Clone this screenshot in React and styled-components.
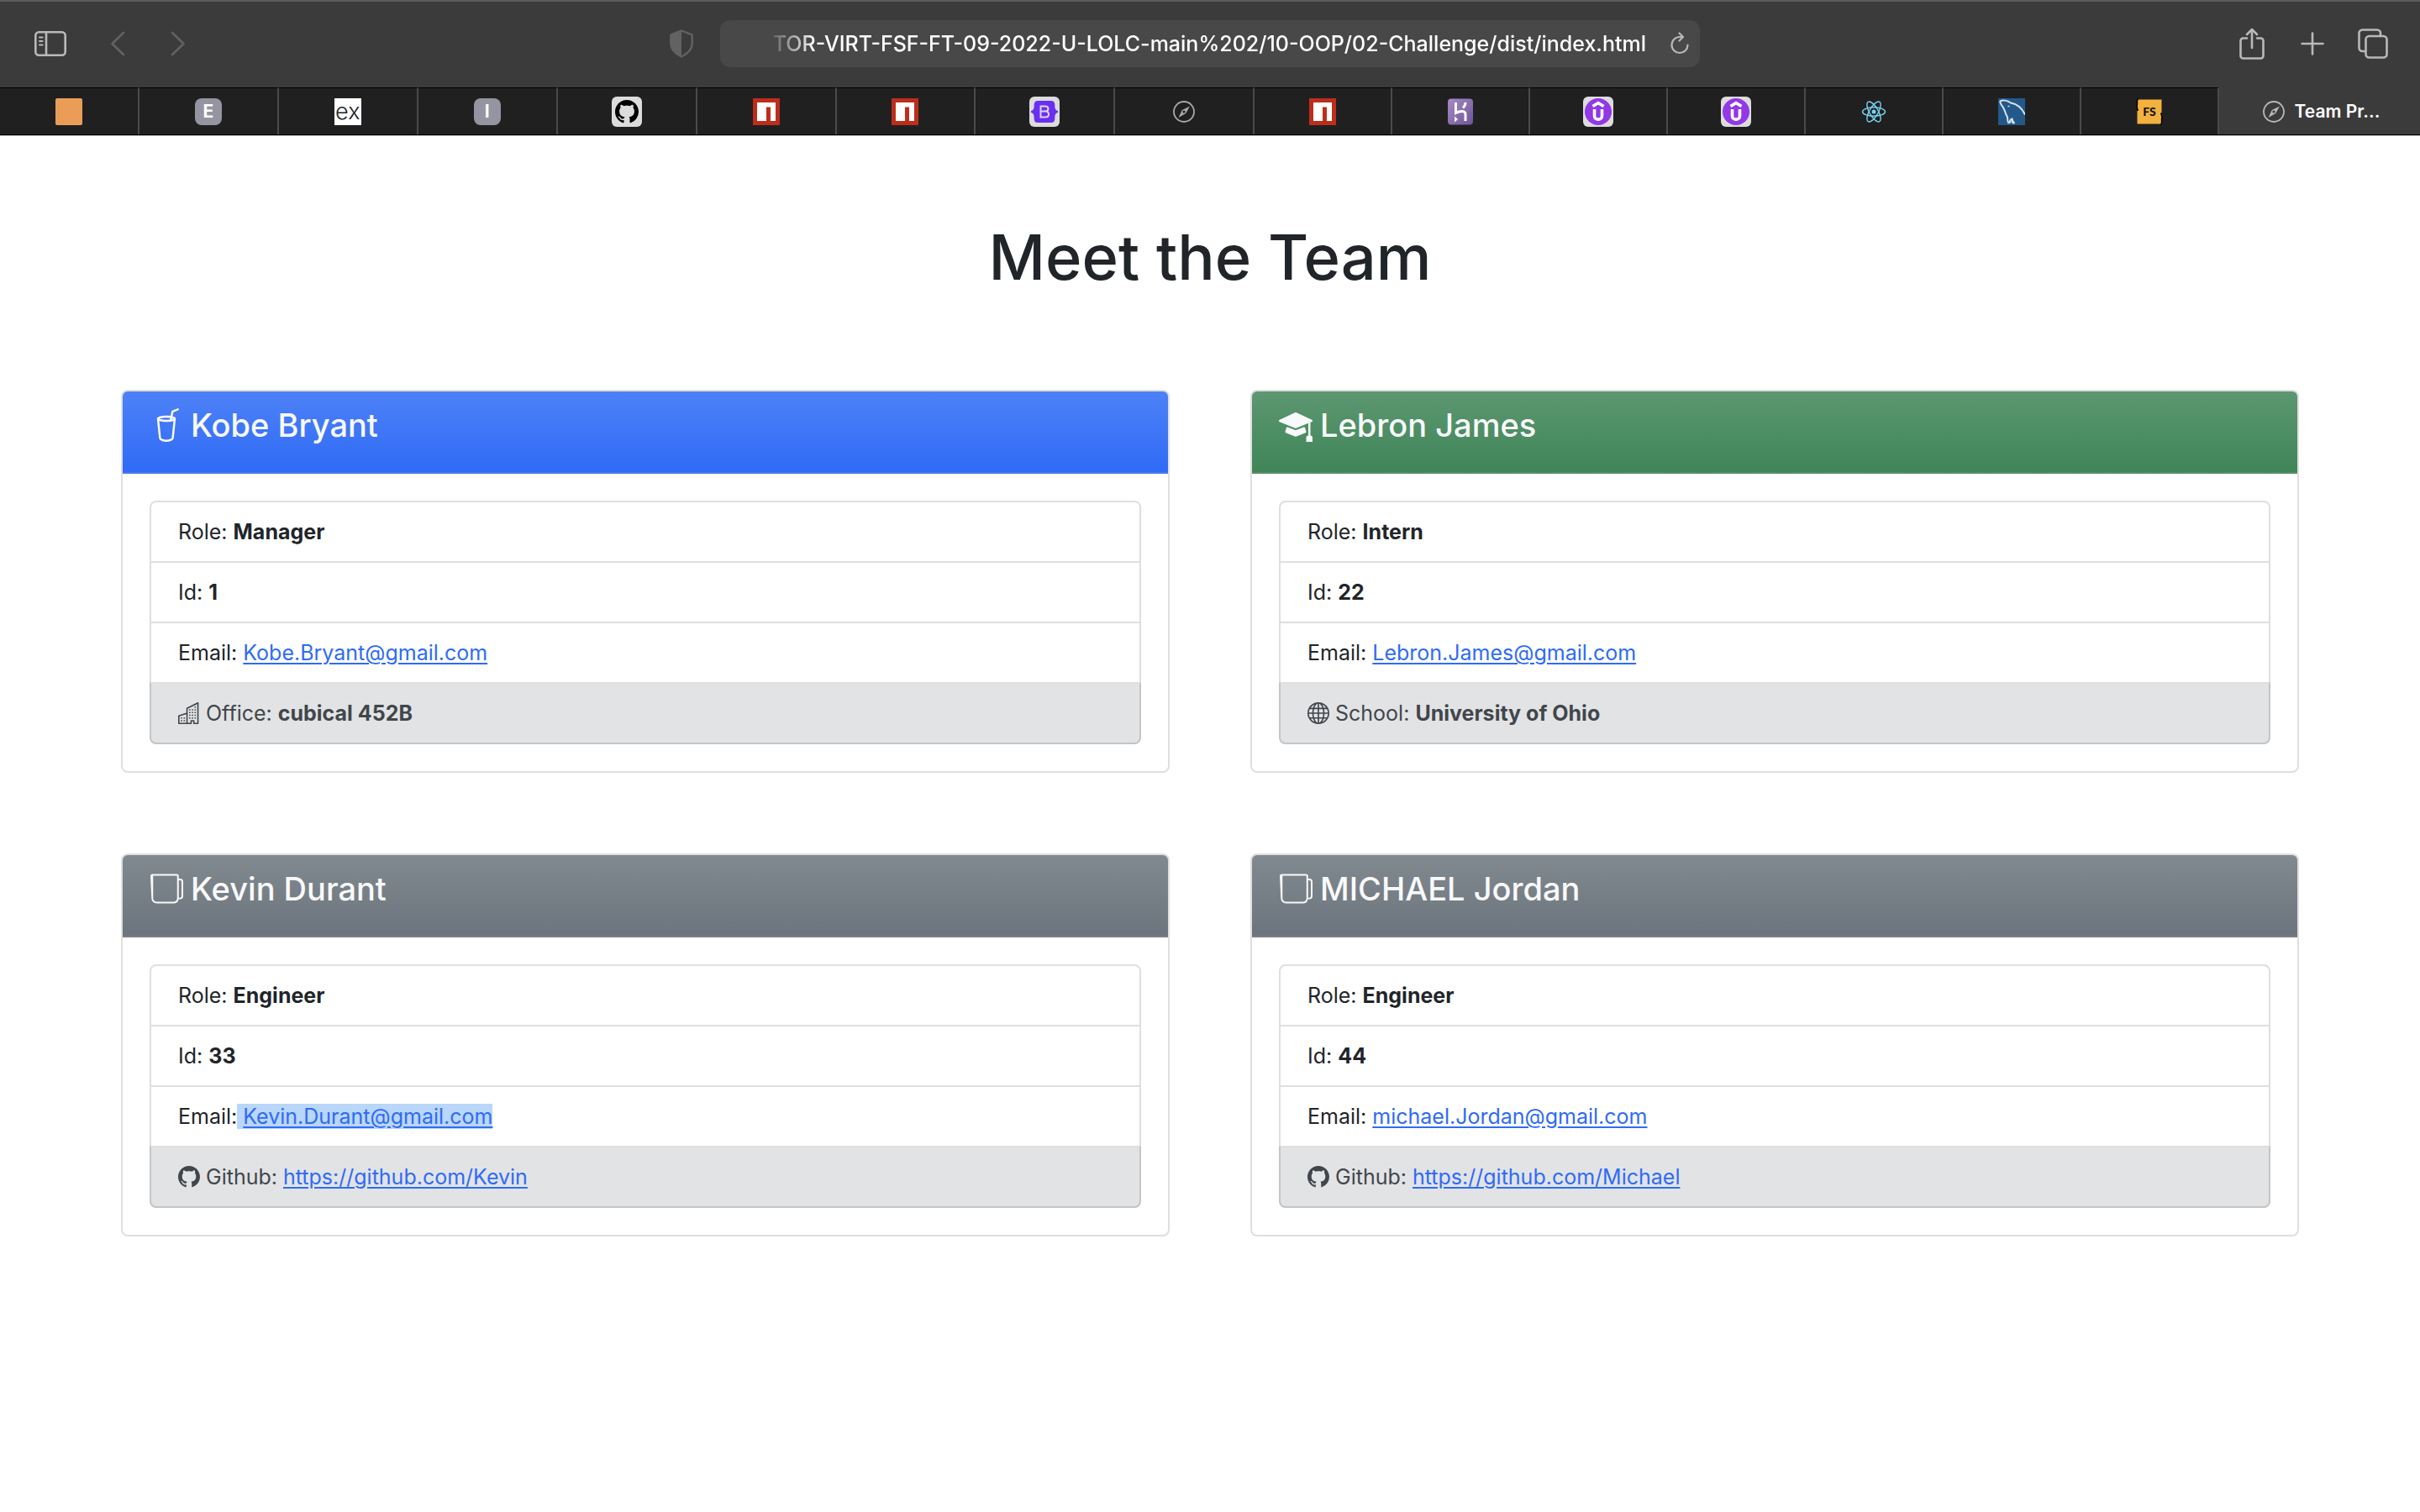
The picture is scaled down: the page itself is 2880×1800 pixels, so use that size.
import React from "react";
import styled, { createGlobalStyle, css } from "styled-components";
import {
  BsCupStraw,
  BsMortarboardFill,
  BsBuildings,
  BsGlobe,
  BsGithub,
} from "react-icons/bs";

const Global = createGlobalStyle`
  * { box-sizing: border-box; }
  body {
    margin: 0;
    background: #fff;
    color: #212529;
    font-family: Inter, "Liberation Sans", sans-serif;
    font-size: 25px;
    line-height: 38px;
  }
  svg { display: block; flex: none; }
`;

/* ---------- browser window ---------- */

const Chrome = styled.header`
  background: #3b3b3b;
  border-top: 2px solid #5b5b5b;
  border-bottom: 1px solid #b9b9b9;
`;

const Toolbar = styled.div`
  display: grid;
  grid-template-columns: 1fr auto 1fr;
  align-items: center;
  gap: 22px;
  height: 102px;
  padding: 0 32px 2px;
`;

const ToolGroup = styled.div`
  display: flex;
  align-items: center;
  gap: 24px;
`;

const LeadingTools = styled(ToolGroup)`
  gap: 32px;
  padding-left: 4px;

  & > :last-child {
    margin-left: auto;
  }
`;

const TrailingTools = styled(ToolGroup)`
  justify-content: flex-end;
`;

const ToolButton = styled.button`
  display: flex;
  align-items: center;
  justify-content: center;
  width: 48px;
  height: 48px;
  padding: 0;
  border: 0;
  background: none;
  color: ${(p) => (p.disabled ? "#626262" : "#b9b9b9")};
`;

const AddressField = styled.div`
  display: flex;
  align-items: center;
  gap: 16px;
  width: 1166px;
  height: 56px;
  padding: 0 0 0 54px;
  border-radius: 12px;
  background: #484848;
`;

const AddressInput = styled.input`
  flex: 1;
  min-width: 0;
  padding: 0;
  border: 0;
  outline: 0;
  background: none;
  color: #fff;
  font: 500 25px/38px Inter, "Liberation Sans", sans-serif;
  text-align: right;
  mask-image: linear-gradient(to right, transparent, #000 60px);
`;

const TabStrip = styled.nav`
  display: flex;
  height: 57px;
  border-bottom: 1px solid #000;
`;

const Tab = styled.button`
  display: flex;
  align-items: center;
  justify-content: center;
  gap: 12px;
  flex: ${(p) => p.$grow} 1 0;
  min-width: 0;
  padding: 0;
  border: 0;
  border-right: 2px solid #4a4a4a;
  border-top: 1px solid #000;
  background: #202020;
  color: #fff;
  font: 600 21px/30px Inter, "Liberation Sans", sans-serif;
  white-space: nowrap;
  ${(p) =>
    p.$active &&
    css`
      padding-left: 4px;
      border-right: 0;
      border-color: transparent;
      background: #3b3b3b;
    `}
`;

const Favicon = styled.span`
  display: flex;
  align-items: center;
  justify-content: center;
  width: ${(p) => p.$size || 32}px;
  height: ${(p) => p.$size || 32}px;
  border-radius: ${(p) => p.$radius || 0}px;
  background: ${(p) => p.$bg || "none"};
  color: ${(p) => p.$color || "#fff"};
  font-size: ${(p) => p.$font || 21}px;
  font-weight: ${(p) => p.$weight || 700};
  overflow: hidden;
`;

const Line = (props) => (
  <svg
    fill="none"
    stroke="currentColor"
    strokeWidth="2.6"
    strokeLinecap="round"
    strokeLinejoin="round"
    aria-hidden="true"
    {...props}
  />
);

const SidebarIcon = () => (
  <Line width="38" height="30" viewBox="0 0 38 30">
    <rect x="1.3" y="1.3" width="35.4" height="27.4" rx="4" />
    <path d="M14 1.5v27" />
    <path d="M6 7.5h3.6M6 12h3.6M6 16.5h3.6" strokeWidth="2" />
  </Line>
);
const BackIcon = () => (
  <Line width="18" height="30" viewBox="0 0 18 30"><path d="M16 2 2.5 15 16 28" /></Line>
);
const ForwardIcon = () => (
  <Line width="18" height="30" viewBox="0 0 18 30"><path d="M2 2 15.5 15 2 28" /></Line>
);
const ShieldIcon = () => (
  <svg width="28" height="34" viewBox="0 0 28 34" aria-hidden="true">
    <path
      d="M14 1.5 26 6.2c.5.2.7.5.7 1V17c0 7-5 11.500-12.700 15.500C6.300 28.500 1.300 24 1.300 17V7.200c0-.5.2-.8.7-1z"
      fill="none"
      stroke="#626262"
      strokeWidth="2.4"
    />
    <path d="M14 1.5 2 6.200c-.5.2-.7.5-.7 1V17c0 7 5 11.500 12.700 15.500z" fill="#626262" />
  </svg>
);
const ReloadIcon = () => (
  <Line width="24" height="28" viewBox="0 0 24 28" strokeWidth="2.2">
    <path d="M21.500 15.500a9.500 9.500 0 1 1-9.500-9.500h3" />
    <path d="M11.500 1.500 16 6l-4.500 4.500" />
  </Line>
);
const ShareIcon = () => (
  <Line width="30" height="38" viewBox="0 0 30 38">
    <path d="M9 12.500H4.500a3 3 0 0 0-3 3v18a3 3 0 0 0 3 3h21a3 3 0 0 0 3-3v-18a3 3 0 0 0-3-3H21" />
    <path d="M15 24V2M9 8l6-6 6 6" />
  </Line>
);
const PlusIcon = () => (
  <Line width="28" height="28" viewBox="0 0 28 28"><path d="M14 1.500v25M1.500 14h25" /></Line>
);
const TabsIcon = () => (
  <Line width="36" height="36" viewBox="0 0 36 36">
    <rect x="9.500" y="9" width="25" height="25.500" rx="4" />
    <path d="M9 27H5.500a4 4 0 0 1-4-4V5.500a4 4 0 0 1 4-4H23a4 4 0 0 1 4 4V9" />
  </Line>
);
const CompassIcon = ({ color = "#a8a8a8", hole = "#202020" }) => (
  <svg width="26" height="26" viewBox="0 0 26 26" fill="none" aria-hidden="true">
    <circle cx="13" cy="13" r="12" stroke={color} strokeWidth="1.8" />
    <path d="M20 6.500 15.200 15 6.500 20 10.800 11z" fill={color} />
    <circle cx="13" cy="13" r="1.6" fill={hole} />
  </svg>
);
const NpmIcon = () => (
  <svg width="32" height="32" viewBox="0 0 32 32" aria-hidden="true">
    <path fill="#bc2e1b" d="M0 0h32v32H0z" />
    <path fill="#fff" d="M5 5h22v22h-6V10.500h-5V27H5z" />
  </svg>
);
const BootstrapIcon = () => (
  <svg width="32" height="28" viewBox="0 0 32 28" aria-hidden="true">
    <path
      fill="#6a2ff0"
      d="M8 1h16c3 0 4.500 2 4.300 5-.1 4 .7 6.500 3.700 7v2c-3 .5-3.800 3-3.700 7 .2 3-1.300 5-4.300 5H8c-3 0-4.500-2-4.300-5 .1-4-.7-6.500-3.700-7v-2c3-.5 3.800-3 3.700-7C3.500 3 5 1 8 1z"
    />
    <path
      fill="none"
      stroke="#dcd6f5"
      strokeWidth="2"
      d="M11.500 7.500H17c4.600 0 4.600 6 0 6h-5.500zM11.500 13.500H17c5.400 0 5.400 7 0 7h-5.500z"
    />
  </svg>
);
const HerokuIcon = () => (
  <svg width="32" height="32" viewBox="0 0 32 32" aria-hidden="true">
    <defs>
      <linearGradient id="heroku" x1="0" y1="0" x2="1" y2="1">
        <stop offset="0" stopColor="#a78bc8" />
        <stop offset="1" stopColor="#6f5596" />
      </linearGradient>
    </defs>
    <rect x="1" y="0.500" width="30" height="31" rx="4" fill="url(#heroku)" />
    <path
      d="M10.500 5v12.500c4-2 11.500-3.500 11.500 1V27M22 5c0 2.500-1 4.500-3 6.500"
      fill="none"
      stroke="#fff"
      strokeWidth="3"
    />
    <path d="M9 21.500 13 25l-4 3.500z" fill="#fff" />
  </svg>
);
const UdemyIcon = () => (
  <svg width="34" height="34" viewBox="0 0 34 34" aria-hidden="true">
    <circle cx="17" cy="17" r="16" fill="#9238e6" />
    <path
      d="M10.500 10.500 17 6.500l6.500 4M12.500 14v8c0 5.500 9 5.500 9 0v-8"
      fill="none"
      stroke="#fff"
      strokeWidth="3.600"
    />
  </svg>
);
const ReactIcon = () => (
  <svg width="30" height="30" viewBox="0 0 30 30" fill="none" stroke="#78d3f0" strokeWidth="1.400" aria-hidden="true">
    <ellipse cx="15" cy="15" rx="13.500" ry="5.200" />
    <ellipse cx="15" cy="15" rx="13.500" ry="5.200" transform="rotate(60 15 15)" />
    <ellipse cx="15" cy="15" rx="13.500" ry="5.200" transform="rotate(120 15 15)" />
    <circle cx="15" cy="15" r="2.500" fill="#78d3f0" stroke="none" />
  </svg>
);
const MysqlIcon = () => (
  <svg width="32" height="32" viewBox="0 0 32 32" fill="none" stroke="#d5e2ec" aria-hidden="true">
    <path fill="#23598a" stroke="none" d="M0 0h32v32H0z" />
    <path d="M32 19.500C28.500 12 23 7 15 5.500 11 2.500 5 1.500 2.500 3.500c-1 3 2.500 5 4 8.500 2 4 2.500 7 4.500 10.500 0 3 0 5 1.500 7.500" strokeWidth="2" />
    <path d="M13.500 30c0-3 1-4.500 3-5.500.5 2.500 1.500 4 3 5.500M16 27l2 3" strokeWidth="2" />
    <path d="M11.500 9.500h2" strokeWidth="1.500" />
  </svg>
);
const BracesIcon = () => (
  <svg width="32" height="32" viewBox="0 0 32 32" fill="none" aria-hidden="true">
    <path fill="#f3b13e" d="M1.500 1.500h29v29h-29z" />
    <path
      d="M3 .8C1.200.8 1.500 3 1.500 6.500S.8 7.500.8 8.500s.9.500.9 5.500H3M29 31.200c1.800 0 1.500-2.200 1.500-6s.7-1 .7-2-1-.5-1-5H29"
      stroke="#000"
      strokeWidth="1.400"
    />
    <text
      x="16"
      y="21"
      fill="#111"
      fontFamily="Lato, sans-serif"
      fontSize="14"
      fontWeight="900"
      textAnchor="middle"
    >
      FS
    </text>
  </svg>
);

const tabs = [
  { name: "Slides", icon: <Favicon $bg="#eb9d58" $radius={2} /> },
  { name: "E", icon: <Favicon $bg="#9594a1" $radius={8}>E</Favicon> },
  { name: "Express", icon: <Favicon $bg="#fff" $color="#222" $weight={300} $font={27}>ex</Favicon> },
  { name: "I", icon: <Favicon $bg="#9594a1" $radius={8}>I</Favicon> },
  { name: "GitHub", icon: <Favicon $size={36} $bg="#dcdcdc" $radius={6} $color="#000"><BsGithub size={28} /></Favicon> },
  { name: "npm", icon: <NpmIcon /> },
  { name: "npm", icon: <NpmIcon /> },
  { name: "Bootstrap", icon: <Favicon $size={36} $bg="#dcdcdc" $radius={6}><BootstrapIcon /></Favicon> },
  { name: "Page", icon: <CompassIcon /> },
  { name: "npm", icon: <NpmIcon /> },
  { name: "Heroku", icon: <HerokuIcon /> },
  { name: "Course", icon: <Favicon $size={36} $bg="#dcdcdc" $radius={6}><UdemyIcon /></Favicon> },
  { name: "Course", icon: <Favicon $size={36} $bg="#dcdcdc" $radius={6}><UdemyIcon /></Favicon> },
  { name: "React", icon: <ReactIcon /> },
  { name: "MySQL", icon: <MysqlIcon /> },
  { name: "FS", icon: <BracesIcon /> },
];

/* ---------- team page ---------- */

const Page = styled.main`
  padding: 96px 5% 144px;
`;

const Title = styled.h1`
  margin: 0 0 110px;
  font-size: 74px;
  font-weight: 500;
  line-height: 96px;
  text-align: center;
`;

const Team = styled.div`
  display: grid;
  grid-template-columns: 1fr 1fr;
  gap: 96px;
`;

const Card = styled.article`
  border: 2px solid #dfdfdf;
  border-radius: 8px;
  overflow: hidden;
`;

const headerColors = {
  Manager: "#2f6bf6",
  Intern: "#408558",
  Engineer: "#6c757d",
};

const CardHeader = styled.div`
  padding: 16px 32px;
  border-bottom: 2px solid rgba(0, 0, 0, 0.06);
  background: linear-gradient(rgba(255, 255, 255, 0.15), rgba(255, 255, 255, 0))
    ${(p) => headerColors[p.$role]};
  color: #f8f9fa;
`;

const Name = styled.h2`
  display: flex;
  align-items: center;
  gap: 9px;
  margin: 0 0 16px;
  font-size: 38px;
  font-weight: 500;
  line-height: 48px;
`;

const MugIcon = ({ size }) => (
  <svg width={size} height={size} viewBox="0 0 16 16" fill="currentColor" aria-hidden="true">
    <path
      fillRule="evenodd"
      d="M.11 2A1 1 0 0 1 1.110 1h11.500a1 1 0 0 1 1 1v1.200h.7A1.400 1.400 0 0 1 15.700 4.600v6.900a1.500 1.500 0 0 1-1.500 1.500h-.65a2.500 2.500 0 0 1-2.440 2h-8a2.500 2.500 0 0 1-2.500-2.500zM13.610 12.300h.5a.8.8 0 0 0 .8-.8V4.600a.6.6 0 0 0-.6-.6h-.7zM12.800 1.800H1.400v10.700a1.700 1.700 0 0 0 1.700 1.700h8a1.700 1.700 0 0 0 1.700-1.700z"
      transform="translate(.3 0)"
    />
  </svg>
);

const List = styled.ul`
  margin: 32px;
  padding: 0;
  border: 2px solid #dfdfdf;
  border-radius: 8px;
  list-style: none;
`;

const Item = styled.li`
  display: flex;
  align-items: center;
  padding: 16px 32px;
  white-space: pre;

  & + & {
    border-top: 2px solid #dfdfdf;
  }

  ${(p) =>
    p.$muted &&
    css`
      margin: 0 -2px -2px;
      border: 2px solid #c4c5c7;
      border-radius: 0 0 8px 8px;
      background: #e2e3e5;
      color: #41464b;

      & > svg {
        margin-right: 7px;
      }
    `}
`;

const Link = styled.a`
  color: #2f6bf6;
  text-decoration: underline;
  text-decoration-thickness: 2px;
  text-underline-offset: 3px;
`;

const Selection = styled.span`
  height: 30px;
  line-height: 30px;
  background: #b9d6fb;
`;

const roleIcons = { Manager: BsCupStraw, Intern: BsMortarboardFill, Engineer: MugIcon };

const team = [
  {
    name: "Kobe Bryant",
    role: "Manager",
    id: 1,
    email: "Kobe.Bryant@gmail.com",
    extra: { icon: BsBuildings, label: "Office", value: "cubical 452B" },
  },
  {
    name: "Lebron James",
    role: "Intern",
    id: 22,
    email: "Lebron.James@gmail.com",
    extra: { icon: BsGlobe, label: "School", value: "University of Ohio" },
  },
  {
    name: "Kevin Durant",
    role: "Engineer",
    id: 33,
    email: "Kevin.Durant@gmail.com",
    selected: true,
    extra: { icon: BsGithub, label: "Github", link: "https://github.com/Kevin" },
  },
  {
    name: "MICHAEL Jordan",
    role: "Engineer",
    id: 44,
    email: "michael.Jordan@gmail.com",
    extra: { icon: BsGithub, label: "Github", link: "https://github.com/Michael" },
  },
];

function Member({ name, role, id, email, selected, extra }) {
  const RoleIcon = roleIcons[role];
  const ExtraIcon = extra.icon;
  const mail = <Link href={`mailto:${email}`}>{email}</Link>;
  return (
    <Card>
      <CardHeader $role={role}>
        <Name>
          <RoleIcon size={40} />
          {name}
        </Name>
      </CardHeader>
      <List>
        <Item>Role: <strong>{role}</strong></Item>
        <Item>Id: <strong>{id}</strong></Item>
        <Item>
          Email:{selected ? <Selection> {mail}</Selection> : <span> {mail}</span>}
        </Item>
        <Item $muted>
          <ExtraIcon size={26} />
          {extra.label}: {extra.link ? <Link href={extra.link}>{extra.link}</Link> : <strong>{extra.value}</strong>}
        </Item>
      </List>
    </Card>
  );
}

export default function App() {
  return (
    <>
      <Global />
      <Chrome>
        <Toolbar>
          <LeadingTools>
            <ToolButton aria-label="Show sidebar"><SidebarIcon /></ToolButton>
            <ToolGroup>
              <ToolButton aria-label="Back" disabled><BackIcon /></ToolButton>
              <ToolButton aria-label="Forward" disabled><ForwardIcon /></ToolButton>
            </ToolGroup>
            <ToolButton aria-label="Privacy report"><ShieldIcon /></ToolButton>
          </LeadingTools>
          <AddressField>
            <AddressInput
              aria-label="Address"
              defaultValue="TOR-VIRT-FSF-FT-09-2022-U-LOLC-main%202/10-OOP/02-Challenge/dist/index.html"
            />
            <ToolButton aria-label="Reload"><ReloadIcon /></ToolButton>
          </AddressField>
          <TrailingTools>
            <ToolButton aria-label="Share"><ShareIcon /></ToolButton>
            <ToolButton aria-label="New tab"><PlusIcon /></ToolButton>
            <ToolButton aria-label="Tab overview"><TabsIcon /></ToolButton>
          </TrailingTools>
        </Toolbar>
        <TabStrip>
          {tabs.map((tab, i) => (
            <Tab key={i} aria-label={tab.name} $grow={i < 9 ? 166 : 164}>
              {tab.icon}
            </Tab>
          ))}
          <Tab $active $grow={238}>
            <CompassIcon color="#b9b9b9" hole="#3b3b3b" />
            Team Pr...
          </Tab>
        </TabStrip>
      </Chrome>
      <Page>
        <Title>Meet the Team</Title>
        <Team>
          {team.map((member) => (
            <Member key={member.id} {...member} />
          ))}
        </Team>
      </Page>
    </>
  );
}
